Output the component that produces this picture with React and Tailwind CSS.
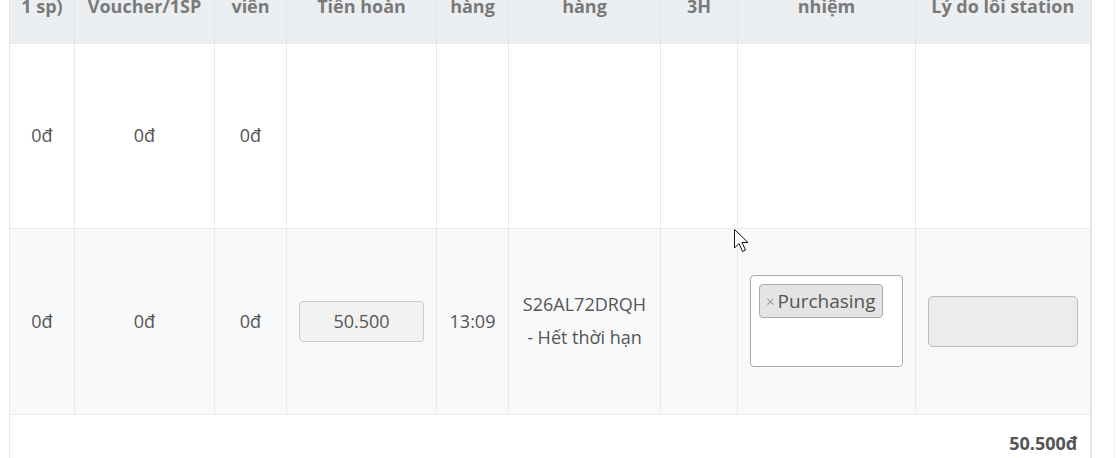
import React from 'react';

const cols = [65, 140, 72, 150, 72, 152, 77, 178, 175];
const headers = ['1 sp)', 'Voucher/1SP', 'viên', 'Tiền hoàn', 'hàng', 'hàng', '3H', 'nhiệm', 'Lý do lỗi station'];

const Cursor = () => (
  <svg className="absolute left-[733px] top-[228px]" width="20" height="28" viewBox="0 0 20 28">
    <path d="M1.5 1.5 L1.5 20 L6 15.5 L9.5 23.5 L12.5 22 L9 14.5 L15 14.5 Z" fill="#fff" stroke="#111" strokeWidth="1" strokeLinejoin="miter" />
  </svg>
);

export default function App() {
  const cell = 'border border-[#e8eaed] text-center align-middle p-0';
  return (
    <div
      className="relative w-[1117px] h-[458px] overflow-hidden bg-white text-[#555] text-[18px]"
      style={{ fontFamily: '"Source Sans Pro", "Open Sans", "Noto Sans", sans-serif' }}
    >
      <div className="flex">
        <div className="w-[9px] shrink-0" />
        <table className="border-collapse table-fixed border-l border-r-2 border-[#e3e5e8] w-[1082px]">
          <colgroup>
            {cols.map((w, i) => (
              <col key={i} style={{ width: w }} />
            ))}
          </colgroup>
          <thead>
            <tr className="bg-[#eceff1] h-[43px]">
              {headers.map((h, i) => (
                <th key={i} className="border-x border-[#e3e5e8] align-top font-bold text-[18px] text-[#7a7a7a] p-0">
                  <div className="-mt-[7px] leading-[26px] whitespace-nowrap">{h}</div>
                </th>
              ))}
            </tr>
          </thead>
          <tbody>
            <tr className="h-[185px] bg-white">
              <td className={cell}>0đ</td>
              <td className={cell}>0đ</td>
              <td className={cell}>0đ</td>
              <td className={cell} />
              <td className={cell} />
              <td className={cell} />
              <td className={cell} />
              <td className={cell} />
              <td className={cell} />
            </tr>
            <tr className="h-[186px] bg-[#f8f9fb]">
              <td className={cell}>0đ</td>
              <td className={cell}>0đ</td>
              <td className={cell}>0đ</td>
              <td className={cell}>
                <div className="ml-[12px] w-[125px] h-[41px] flex items-center justify-center rounded-[4px] border border-[#ccc] bg-[#f2f2f2]">
                  50.500
                </div>
              </td>
              <td className={cell}>13:09</td>
              <td className={cell}>
                <div className="leading-[33px]">
                  S26AL72DRQH
                  <br />- Hết thời hạn
                </div>
              </td>
              <td className={cell} />
              <td className={cell}>
                <div className="ml-[12px] w-[153px] h-[92px] rounded-[4px] border border-[#aaa] bg-white p-[8px] text-left">
                  <span className="inline-flex items-center h-[34px] px-[6px] rounded-[4px] border border-[#aaa] bg-[#e4e4e4] text-[19px] text-[#555]">
                    <span className="text-[#999] text-[15px] mr-[3px]">×</span>Purchasing
                  </span>
                </div>
              </td>
              <td className={cell}>
                <div className="ml-[12px] w-[150px] h-[51px] rounded-[5px] border border-[#bbb] bg-[#ececec]" />
              </td>
            </tr>
            <tr className="h-[60px] bg-white">
              <td colSpan={9} className="border border-[#e8eaed] text-right align-top pt-[15px] pr-[12px] font-bold">
                50.500đ
              </td>
            </tr>
          </tbody>
        </table>
        <div className="ml-[22px] w-px h-[458px] bg-[#eee]" />
      </div>
      <Cursor />
    </div>
  );
}
